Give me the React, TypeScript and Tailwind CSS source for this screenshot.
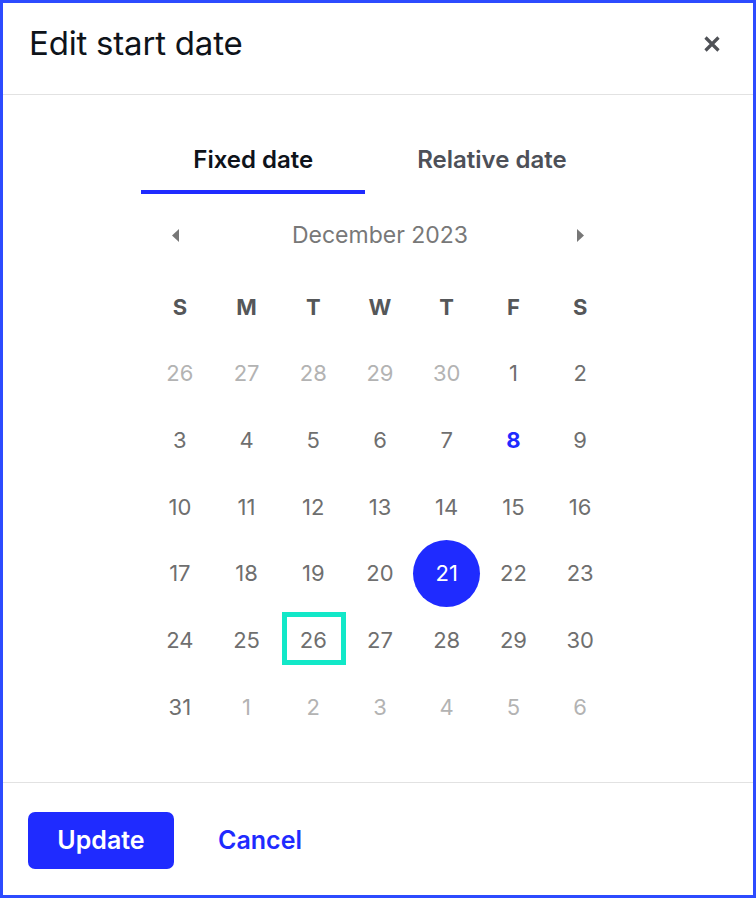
import React from "react";

const weeks: { d: number; out?: boolean }[][] = [
  [{ d: 26, out: true }, { d: 27, out: true }, { d: 28, out: true }, { d: 29, out: true }, { d: 30, out: true }, { d: 1 }, { d: 2 }],
  [{ d: 3 }, { d: 4 }, { d: 5 }, { d: 6 }, { d: 7 }, { d: 8 }, { d: 9 }],
  [{ d: 10 }, { d: 11 }, { d: 12 }, { d: 13 }, { d: 14 }, { d: 15 }, { d: 16 }],
  [{ d: 17 }, { d: 18 }, { d: 19 }, { d: 20 }, { d: 21 }, { d: 22 }, { d: 23 }],
  [{ d: 24 }, { d: 25 }, { d: 26 }, { d: 27 }, { d: 28 }, { d: 29 }, { d: 30 }],
  [{ d: 31 }, { d: 1, out: true }, { d: 2, out: true }, { d: 3, out: true }, { d: 4, out: true }, { d: 5, out: true }, { d: 6, out: true }],
];

const dows = ["S", "M", "T", "W", "T", "F", "S"];

export default function App() {
  return (
    <div
      className="w-[756px] h-[898px] border-[3px] border-[#2d4bff] bg-white flex flex-col"
      style={{ fontFamily: "Inter, 'Noto Sans', sans-serif" }}
    >
      {/* Header */}
      <div className="h-[92px] shrink-0 border-b border-[#e2e2e2] flex items-start justify-between pl-[26px] pr-[32px] pt-[18px]">
        <h1 className="text-[33px] leading-[44px] text-[#0e131a] font-normal tracking-[-0.2px]">Edit start date</h1>
        <button className="mt-[14px] w-[18px] h-[18px] flex items-center justify-center text-[#4f5156]">
          <svg width="18" height="18" viewBox="0 0 18 18" fill="none" stroke="currentColor" strokeWidth="3.2" strokeLinecap="butt">
            <path d="M2.5 2.5L15.5 15.5M15.5 2.5L2.5 15.5" />
          </svg>
        </button>
      </div>

      {/* Body */}
      <div className="flex-1 flex flex-col items-center pl-[4px]">
        <div className="mt-[35px] flex">
          <div className="h-[64px] px-[52px] flex items-center justify-center border-b-4 border-[#1f2bff] text-[24px] font-semibold text-[#0e131a]">
            Fixed date
          </div>
          <div className="h-[64px] px-[52px] flex items-center justify-center border-b-4 border-transparent text-[24px] font-semibold text-[#4d5058]">
            Relative date
          </div>
        </div>

        <div className="mt-[19px] w-[467px] h-[44px] grid grid-cols-7 items-center text-[#777]">
          <div className="flex justify-center pr-[8px]">
            <svg width="7" height="13" viewBox="0 0 7 13" fill="currentColor">
              <path d="M7 0L0 6.5L7 13Z" />
            </svg>
          </div>
          <div className="col-span-5 text-center text-[23px] text-[#787878]">December 2023</div>
          <div className="flex justify-center">
            <svg width="7" height="13" viewBox="0 0 7 13" fill="currentColor">
              <path d="M0 0L7 6.5L0 13Z" />
            </svg>
          </div>
        </div>

        <div className="mt-[17px] w-[467px] grid grid-cols-7">
          {dows.map((d, i) => (
            <div key={i} className="h-[66.67px] flex items-center justify-center text-[22px] font-bold text-[#555759]">
              {d}
            </div>
          ))}
          {weeks.flat().map((c, i) => {
            const selected = !c.out && c.d === 21;
            const today = !c.out && c.d === 8;
            const focus = !c.out && c.d === 26;
            let cls = "text-[#6f6f6f]";
            if (c.out) cls = "text-[#b3b3b3]";
            if (today) cls = "text-[#1f2bff] font-bold";
            return (
              <div key={i} className="h-[66.67px] flex items-center justify-center relative">
                {selected && (
                  <div className="absolute w-[67px] h-[67px] rounded-full bg-[#1f2bff]" />
                )}
                {focus && (
                  <div className="absolute top-[5px] left-[2px] w-[64px] h-[53px] border-[5px] border-[#12e8c8]" />
                )}
                <span className={`relative text-[22px] ${selected ? "text-white" : cls}`}>{c.d}</span>
              </div>
            );
          })}
        </div>
      </div>

      {/* Footer */}
      <div className="h-[113px] shrink-0 border-t border-[#e2e2e2] flex items-start pl-[25px] pt-[29px]">
        <button className="w-[146px] h-[57px] rounded-[7px] bg-[#1f2bff] text-white text-[25px] font-semibold flex items-center justify-center">
          Update
        </button>
        <button className="ml-[44px] h-[57px] text-[#1f2bff] text-[25px] font-semibold flex items-center">
          Cancel
        </button>
      </div>
    </div>
  );
}
